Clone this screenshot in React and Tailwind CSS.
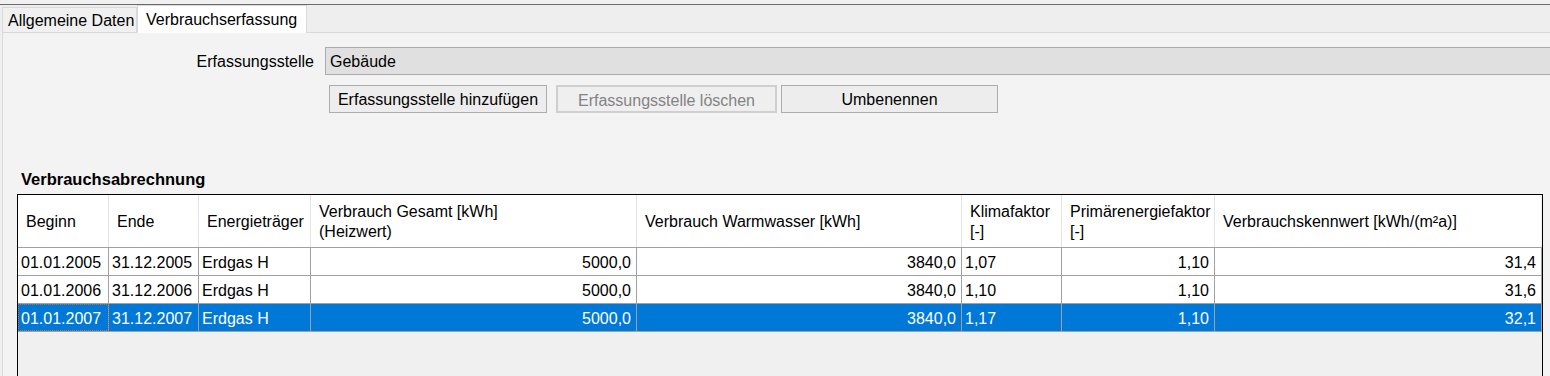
import React from "react";

const columns = [
  { key: "beginn", label: ["Beginn"], width: "w-[91px]", align: "left" },
  { key: "ende", label: ["Ende"], width: "w-[90px]", align: "left" },
  { key: "traeger", label: ["Energieträger"], width: "w-[112px]", align: "left" },
  { key: "gesamt", label: ["Verbrauch Gesamt [kWh]", "(Heizwert)"], width: "w-[326px]", align: "right" },
  { key: "warm", label: ["Verbrauch Warmwasser [kWh]"], width: "w-[325px]", align: "right" },
  { key: "klima", label: ["Klimafaktor", "[-]"], width: "w-[100px]", align: "left" },
  { key: "primaer", label: ["Primärenergiefaktor", "[-]"], width: "w-[153px]", align: "right" },
  { key: "kennwert", label: ["Verbrauchskennwert [kWh/(m²a)]"], width: "w-[327px]", align: "right" },
];

const rows = [
  { id: 1, beginn: "01.01.2005", ende: "31.12.2005", traeger: "Erdgas H", gesamt: "5000,0", warm: "3840,0", klima: "1,07", primaer: "1,10", kennwert: "31,4" },
  { id: 2, beginn: "01.01.2006", ende: "31.12.2006", traeger: "Erdgas H", gesamt: "5000,0", warm: "3840,0", klima: "1,10", primaer: "1,10", kennwert: "31,6" },
  { id: 3, beginn: "01.01.2007", ende: "31.12.2007", traeger: "Erdgas H", gesamt: "5000,0", warm: "3840,0", klima: "1,17", primaer: "1,10", kennwert: "32,1" },
];

const App = () => {
  const selectedId = 3;

  return (
    <div className="w-[1550px] h-[376px] overflow-hidden bg-[#f0f0f0] font-['Liberation_Sans',Arial,sans-serif] text-[16px] text-black flex flex-col">
      <div className="h-[4px] bg-[#f0f0f0]"></div>
      <div className="h-px bg-[#6b6b6b]"></div>

      {/* Tabs */}
      <div className="h-[27px] flex items-end pl-[2px] bg-[#eeeeee]">
        <div className="w-[135px] h-[25px] flex items-center pt-[2px] pl-[5px] border border-b-0 border-[#d9d9d9] bg-[#f0f0f0] leading-none whitespace-nowrap">
          Allgemeine Daten
        </div>
        <div className="relative z-10 -mb-px w-[170px] h-[28px] flex items-start pt-[6px] pl-[8px] border border-b-0 border-[#d9d9d9] bg-white leading-none whitespace-nowrap">
          Verbrauchserfassung
        </div>
      </div>

      {/* Tab page */}
      <div className="flex-1 ml-[2px] border-l border-t border-[#d9d9d9] bg-[#f3f3f3] flex flex-col">
        <div className="mt-[14px] flex items-center">
          <div className="w-[311px] text-right pt-[2px]">Erfassungsstelle</div>
          <div className="ml-[11px] flex-1 h-[28px] flex items-center pt-[2px] pl-[4px] bg-[#e0e0e0] border-y border-l border-[#ababab]">
            Gebäude
          </div>
        </div>

        <div className="mt-[10px] pl-[326px] flex items-center">
          <button className="w-[218px] h-[28px] pt-[2px] border border-[#adadad] bg-[#ededed] whitespace-nowrap">
            Erfassungsstelle hinzufügen
          </button>
          <button
            disabled
            className="ml-[9px] w-[221px] h-[28px] pt-[2px] border-2 border-[#cfcfcf] bg-[#efefef] text-[#838383] whitespace-nowrap"
          >
            Erfassungsstelle löschen
          </button>
          <button className="ml-[4px] w-[217px] h-[28px] pt-[2px] border border-[#adadad] bg-[#ededed]">
            Umbenennen
          </button>
        </div>

        <div className="mt-[55px] pl-[18px] font-bold text-[16.5px] leading-[20px] pt-px">Verbrauchsabrechnung</div>

        {/* Grid */}
        <div className="mt-[5px] ml-[14px] w-[1526px] flex-1 border border-b-0 border-black bg-[#f0f0f0]">
          <div className="flex h-[53px] bg-white border-b border-[#a0a0a0]">
            {columns.map((col, i) => (
              <div
                key={col.key}
                className={`${col.width} h-full flex flex-col justify-center pt-[2px] pl-[8px] leading-[20px] whitespace-nowrap ${
                  i < columns.length - 1 ? "border-r border-[#e3e3e3]" : "border-r border-[#f0f0f0]"
                }`}
              >
                {col.label.map((line) => (
                  <span key={line}>{line}</span>
                ))}
              </div>
            ))}
          </div>

          {rows.map((row) => {
            const selected = row.id === selectedId;
            return (
              <div
                key={row.id}
                className={`flex h-[28px] border-b border-[#a0a0a0] ${
                  selected ? "bg-[#0078d7] text-white" : "bg-white"
                }`}
              >
                {columns.map((col, i) => (
                  <div
                    key={col.key}
                    className={`${col.width} h-full flex items-center pt-[2px] border-r border-[#a0a0a0] whitespace-nowrap ${
                      col.align === "right" ? "justify-end pr-[5px]" : "pl-[3px]"
                    } ${selected && i === 0 ? "outline-1 outline-dotted outline-[#b07a3a] -outline-offset-1" : ""}`}
                  >
                    {row[col.key]}
                  </div>
                ))}
              </div>
            );
          })}
        </div>
      </div>
    </div>
  );
};

export default App;
